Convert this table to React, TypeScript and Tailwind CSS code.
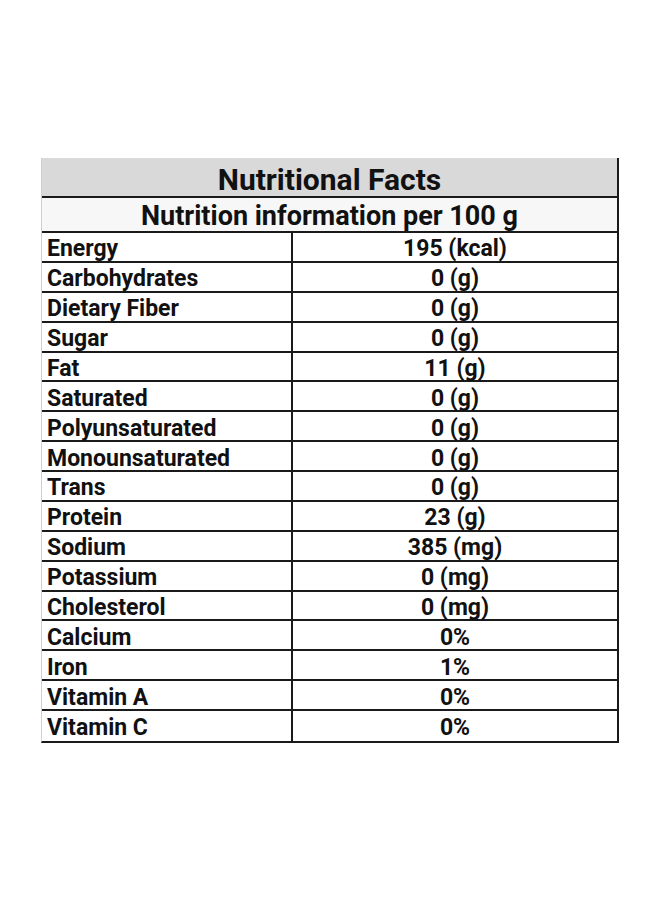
const ROWS: [string, string][] = [
  ['Energy', '195 (kcal)'],
  ['Carbohydrates', '0 (g)'],
  ['Dietary Fiber', '0 (g)'],
  ['Sugar', '0 (g)'],
  ['Fat', '11 (g)'],
  ['Saturated', '0 (g)'],
  ['Polyunsaturated', '0 (g)'],
  ['Monounsaturated', '0 (g)'],
  ['Trans', '0 (g)'],
  ['Protein', '23 (g)'],
  ['Sodium', '385 (mg)'],
  ['Potassium', '0 (mg)'],
  ['Cholesterol', '0 (mg)'],
  ['Calcium', '0%'],
  ['Iron', '1%'],
  ['Vitamin A', '0%'],
  ['Vitamin C', '0%'],
]

export default function App() {
  return (
    <div className="w-[660px] h-[900px] bg-white pt-[158px] pl-[41px] font-['Roboto',sans-serif] font-bold text-[#111]">
      <div className="w-[578px] border-l border-l-[#d0d0d0] border-r-2 border-r-[#1a1a1a] border-b-2 border-b-[#1a1a1a]">
        <div className="h-[40px] bg-[#d9d9d9] border-b-2 border-[#1a1a1a] flex items-center justify-center text-[30px] leading-none pt-[5px]">
          Nutritional Facts
        </div>
        <div className="h-[35px] bg-[#f7f7f7] border-b-2 border-[#1a1a1a] flex items-center justify-center text-[27px] leading-none pt-[3px]">
          Nutrition information per 100 g
        </div>
        {ROWS.map(([name, value], i) => (
          <div
            key={name}
            className={`flex h-[29.88px] text-[23px] leading-none ${i < ROWS.length - 1 ? 'border-b-2 border-[#1a1a1a]' : ''}`}
          >
            <div className="w-[251px] border-r-2 border-[#1a1a1a] flex items-center pl-[5px] pt-[4px]">{name}</div>
            <div className="flex-1 flex items-center justify-center pt-[4px]">{value}</div>
          </div>
        ))}
      </div>
    </div>
  )
}
